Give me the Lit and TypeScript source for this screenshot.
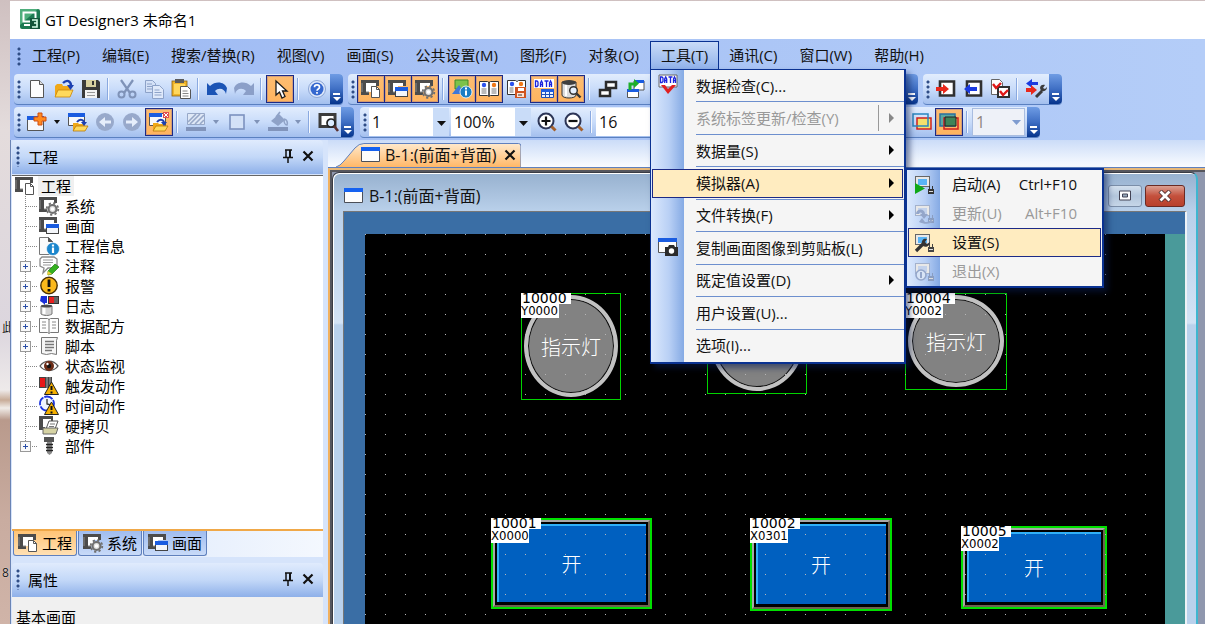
import { LitElement, html, svg, css, nothing } from "lit";
import { customElement } from "lit/decorators.js";
import { classMap } from "lit/directives/class-map.js";
import { styleMap } from "lit/directives/style-map.js";

const screen = svg`<path d="M0 1h18v6h-3V4H5v9h3v3H0z" fill="#4c4c4c"/><path d="M5 4h10v3h-5v6H5z" fill="#fff"/><path d="M1 4v9M5 13h3" stroke="#8a8a8a"/>`;
const miniWin = svg`<rect x="7.5" y="8.500" width="12" height="9" fill="#f4f6fa" stroke="#444"/><path d="M7 8h13v4H7z" fill="#1a5ce0"/>`;
const folder = svg`<path d="M1 7l2-2h5l1 2h7v11H1z" fill="#f0a818"/><path d="M4 11h15l-3 7H1z" fill="#ffd95c" stroke="#c98508" stroke-width=".8"/>`;
const warn = svg`<path d="M12.500 6L19.500 18.500H5.500z" fill="#f5b000" stroke="#222"/><path d="M12.500 10v4M12.500 15.500v2" stroke="#111" stroke-width="2"/>`;
const pc = (c: string, s: string) => svg`<rect x="1.500" y="2.500" width="14" height="10" fill="#e8e8e8" stroke="${s}"/><rect x="4" y="5" width="9" height="6" fill="${c}"/>`;
const plug = (c: string) => svg`<path d="M14 15h6v5h-6zM15 12h1v3h-1zM18 12h1v3h-1z" fill="${c}"/><path d="M15 17.500h4" stroke="#ddd"/>`;

const ICONS: Record<string, unknown> = {
  app: svg`<rect width="20" height="20" rx="2" fill="#1c7a52"/><path d="M0 0h18L0 16z" fill="#4fae7c"/><rect x="3.500" y="3.500" width="12" height="9" fill="none" stroke="#fff" stroke-width="2"/><path d="M4 16h6" stroke="#fff" stroke-width="2"/><rect x="10" y="9" width="10" height="11" fill="#14563a"/><path d="M12 11h5v3h-3 3v4h-5" fill="none" stroke="#d8ffe9" stroke-width="1.600"/>`,
  new: svg`<path d="M3.500 1.500h9l4 4v13h-13z" fill="#fdfdfd" stroke="#555"/><path d="M12.500 1.500v4h4" fill="#ddd" stroke="#555"/>`,
  open: svg`${folder}<path d="M9 4c4-4 8-2 8 3" fill="none" stroke="#1c3fb0" stroke-width="2.400"/><path d="M13 6h7l-3.500 5z" fill="#1c3fb0"/>`,
  save: svg`<path d="M1 1h16l2 2v16H1z" fill="#3a3a3a"/><path d="M5 1h10v7H5z" fill="#d8d0a0"/><path d="M11 2h2v4h-2z" fill="#333"/><path d="M4 11h12v8H4z" fill="#f4f4f4"/><path d="M6 13.500h8M6 16.500h8" stroke="#999"/>`,
  cut: svg`<path d="M4 1l9 13M16 1L7 14" stroke="#7f93b8" stroke-width="2.200"/><circle cx="4.500" cy="15.500" r="3" fill="none" stroke="#7f93b8" stroke-width="2"/><circle cx="15.500" cy="15.500" r="3" fill="none" stroke="#7f93b8" stroke-width="2"/>`,
  copy: svg`<path d="M1.500 1.500h7l3 3v9h-10z" fill="#d4e1f7" stroke="#8da2c8"/><path d="M3 5h5M3 7.500h5M3 10h5" stroke="#8da2c8"/><path d="M8.500 6.500h7l4 4v9h-11z" fill="#dfe9fa" stroke="#8da2c8"/><path d="M10.500 11h5M10.500 13.500h7M10.500 16h7" stroke="#8da2c8"/>`,
  paste: svg`<rect x="1" y="2" width="15" height="15" fill="#f0b429" stroke="#8a6210" stroke-width=".8"/><rect x="4" y="0" width="9" height="4" fill="#5b5b5b"/><rect x="3" y="5" width="11" height="10" fill="#ffd75c"/><path d="M9.500 7.500h7l3 3v9h-10z" fill="#fff" stroke="#555"/><path d="M11.500 12h5M11.500 14.500h6M11.500 17h6" stroke="#888"/>`,
  undo: svg`<path d="M0 4l3 3c6-6 15-4 17 2l-1 6c-1-5-7-7-11-3l3 4H0z" fill="#1b54b5"/>`,
  redo: svg`<path d="M20 4l-3 3C11 1 2 3 0 9l1 6c1-5 7-7 11-3l-3 4h11z" fill="#8b9fc8"/>`,
  pointer: svg`<path d="M6 2v14l3.500-3 2.500 6 3-1.500-2.500-5.500H17z" fill="#fff" stroke="#1a1a1a" stroke-width="1.300"/>`,
  help: svg`<circle cx="10" cy="10" r="8.500" fill="#dfe9fb" stroke="#8aa4d4"/><circle cx="10" cy="10" r="6.500" fill="#3568cf"/><path d="M7.500 8.200c0-3 5-3 5 0 0 1.800-2.500 1.800-2.500 3.600M10 13v1.800" fill="none" stroke="#fff" stroke-width="1.700"/>`,
  project: svg`${screen}<path d="M10.500 7.500h5l3 3v8h-8z" fill="#fff" stroke="#555"/><path d="M15.500 7.500v3h3" fill="none" stroke="#555"/>`,
  screens: svg`${screen}${miniWin}`,
  system: svg`${screen}<circle cx="13.500" cy="13" r="4" fill="#ddd" stroke="#707070" stroke-width="2.200"/><circle cx="13.500" cy="13" r="5.800" fill="none" stroke="#707070" stroke-width="1.800" stroke-dasharray="2.200 2.350"/><circle cx="13.500" cy="13" r="1.800" fill="#fff"/>`,
  shapes: svg`<path d="M3 1h13v9H3z" fill="#7cc24a" stroke="#3c8a28"/><path d="M0 15L7 6l6 9z" fill="#3f78d8"/><circle cx="14" cy="13" r="6" fill="#1b7ec4" stroke="#fff" stroke-width=".8"/><path d="M14 8.500v2M14 11.500v5" stroke="#fff" stroke-width="2"/>`,
  book: svg`<path d="M.5 2.500h8l1.500 1 1.500-1h8v14h-8l-1.500 1-1.500-1h-8z" fill="#fff" stroke="#333"/><path d="M10 3v14" stroke="#333" stroke-width="1.600"/><circle cx="5" cy="6" r="2.200" fill="#2d52ee"/><circle cx="15" cy="6" r="2.200" fill="#f07818"/><path d="M2.500 10h5M2.500 12h5M2.500 14h5M12.500 10h5M12.500 12h5M12.500 14h5" stroke="#777"/>`,
  bookSave: svg`<path d="M.5 1.500h8l1.500 1 1.500-1h7v14H.5z" fill="#fff" stroke="#333"/><circle cx="5" cy="5" r="2.200" fill="#2d52ee"/><circle cx="14" cy="5" r="2.200" fill="#f07818"/><path d="M2.500 9h4M2.500 11h4M2.500 13h4" stroke="#777"/><path d="M8 8h11v11H8z" fill="#cf5420"/><path d="M11 9h6v3h-6z" fill="#fff"/><path d="M10 14h7v4h-7z" fill="#ffe3d2"/><path d="M11 16h4" stroke="#333"/>`,
  data: svg`<path d="M0 0h20v9H0z" fill="#fff"/><path d="M1.500 2v5.500h1.500l1-1V3L3 2zM6.500 8V4l1-2 1 2v4M6.500 5.500h2M10.500 2h4M12.500 2v6M15.500 8V4l1-2 1 2v4M15.500 5.500h2" fill="none" stroke="#1b23dd" stroke-width="1.300"/><path d="M7.500 10.500h12v8h-12z" fill="#eaf2ff" stroke="#1e4fb8"/><path d="M7 10h13v3H7z" fill="#1d5cdf"/><path d="M11.500 13v6M15.500 13v6M7 15.500h12" stroke="#1e4fb8"/>`,
  dataCheck: svg`<path d="M1 0h18v12H1z" fill="#fff" stroke="#666"/><path d="M2.500 2v5.500h1.500l1-1V3L4 2zM6.700 8V4l1-2 1 2v4M6.700 5.500h2M10.500 2h4M12.500 2v6M15.500 8V4l1-2 1 2v4M15.500 5.500h2" fill="none" stroke="#1b23dd" stroke-width="1.300"/><path d="M3 10h4l3 4 4-4h4l-8 9z" fill="#e02020"/>`,
  db: svg`<path d="M1 3v13c0 4 14 4 14 0V3z" fill="#dcdcdc" stroke="#333"/><path d="M5 5v12" stroke="#fff" stroke-width="2"/><ellipse cx="8" cy="3.500" rx="7" ry="2.500" fill="#3e3e3e"/><circle cx="12.500" cy="11.500" r="3.800" fill="#e6f1ff" stroke="#333" stroke-width="1.500"/><path d="M15.500 14.500l4 4" stroke="#333" stroke-width="2.400"/>`,
  windows: svg`<path d="M8 3h10v6H8z" fill="#fff" stroke="#2c2c2c" stroke-width="2.500"/><path d="M2 11h10v6H2z" fill="#fff" stroke="#2c2c2c" stroke-width="2.500"/>`,
  winSwap: svg`<path d="M9 2h10v9H9z" fill="#fff" stroke="#555"/><path d="M9 1h10v3H9z" fill="#1a5ce0"/><path d="M2.500 10.500h11v8h-11z" fill="#fff" stroke="#555"/><path d="M2 10h12v3H2z" fill="#1a5ce0"/><path d="M5 11V5h4" fill="none" stroke="#1dae2b" stroke-width="3"/><path d="M9 0v9l5-4.500z" fill="#1dae2b"/>`,
  importD: svg`<path d="M4 2.500h14v14H4z" fill="#fff" stroke="#303030" stroke-width="2.600"/><path d="M0 8h7V5l6 5-6 5v-3H0z" fill="#e8281c"/>`,
  exportD: svg`<path d="M4 2.500h14v14H4z" fill="#fff" stroke="#303030" stroke-width="2.600"/><path d="M14 8H7V5l-6 5 6 5v-3h7z" fill="#1c3be0"/>`,
  verify: svg`<path d="M1.500.5h8l3 3v12h-11z" fill="#fff" stroke="#666"/><path d="M8 8h11v10H8z" fill="#fff" stroke="#303030" stroke-width="2"/><path d="M3 5l3 4 5-5M10 12l3 4 5-5" fill="none" stroke="#e01818" stroke-width="2.400"/>`,
  comm: svg`<path d="M12 3H6V0L0 4.500 6 9V6h6z" fill="#1c3be0"/><path d="M0 9h5V6l6 5-6 5v-3H0z" fill="#e8281c"/><path d="M10 18l6-6" stroke="#3c3c3c" stroke-width="3"/><path d="M14 9c0-3 3-4 5-3l-2 3 2 1 2-2c0 4-4 5-6 4z" fill="#3c3c3c"/>`,
  screenNew: svg`<path d="M.5 4.500h16v14H.5z" fill="#f6f8fb" stroke="#555"/><path d="M0 4h17v4H0z" fill="#1a5ce0"/><path d="M11 1h4v4h4v4h-4v4h-4V9H7V5h4z" fill="#ff8b20" stroke="#d04c10"/>`,
  screenOpen: svg`<path d="M.5 1.500h16v12H.5z" fill="#f6f8fb" stroke="#555"/><path d="M0 1h17v4H0z" fill="#1a5ce0"/><path d="M5 11h5l1 1h6v7H5z" fill="#f0a818"/><path d="M8 14h12l-3 5H5z" fill="#ffd95c" stroke="#b87a08" stroke-width=".8"/><path d="M9 10c3-4 7-2 7 1" fill="none" stroke="#1c3fb0" stroke-width="2"/><path d="M13 10h6l-3 4z" fill="#1c3fb0"/>`,
  screenClose: svg`<path d="M.5 1.500h16v12H.5z" fill="#f6f8fb" stroke="#555"/><path d="M0 1h13v4H0z" fill="#1a5ce0"/><path d="M14 0h6v6h-6z" fill="#e05050"/><path d="M15 1l4 4M19 1l-4 4" stroke="#fff"/><path d="M4 11h5l1 1h6v7H4z" fill="#f0a818"/><path d="M7 14h12l-3 5H4z" fill="#ffd95c" stroke="#b87a08" stroke-width=".8"/><path d="M8 10c3-4 7-2 7 1" fill="none" stroke="#1c3fb0" stroke-width="2"/><path d="M12 10h6l-3 4z" fill="#1c3fb0"/>`,
  back: svg`<circle cx="10" cy="10" r="9" fill="#98a9cb"/><path d="M16 8.500h-6V5l-6 5 6 5v-3.500h6z" fill="#e6eefb"/>`,
  forward: svg`<circle cx="10" cy="10" r="9" fill="#98a9cb"/><path d="M4 8.500h6V5l6 5-6 5v-3.500H4z" fill="#e6eefb"/>`,
  hatch: svg`<path d="M1.500 1.500h17v11h-17z" fill="#dfe8f6" stroke="#97a8c8"/><path d="M2 10l8-8M4 12L14 2M9 12l9-9M14 12l4-4" stroke="#97a8c8" stroke-width="1.600"/><path d="M0 15h20v4H0z" fill="#8194bb"/>`,
  rect: svg`<rect x="3" y="3" width="14" height="14" fill="#d3e1f7" stroke="#7c92bf" stroke-width="1.600"/>`,
  bucket: svg`<path d="M3 9l8-7 6 6-7 6z" fill="#8fa2c7"/><path d="M8 5l4-5M16 7c3 0 4 4 3 6-2 0-3-3-3-5" stroke="#8fa2c7" stroke-width="1.600" fill="none"/><path d="M0 15h20v4H0z" fill="#8194bb"/>`,
  find: svg`<path d="M2 2.500h15v12H2z" fill="#fff" stroke="#3c3c3c" stroke-width="3"/><circle cx="13" cy="11" r="4" fill="#dcebff" stroke="#222" stroke-width="1.700"/><path d="M16 14l4 5" stroke="#5a3030" stroke-width="2.600"/>`,
  zoomIn: svg`<circle cx="9" cy="9" r="7.500" fill="#fff" stroke="#2c3556" stroke-width="2"/><path d="M4.500 9h9M9 4.500v9" stroke="#111" stroke-width="2.200"/><path d="M14.500 14.500l4 4" stroke="#a4602c" stroke-width="3"/>`,
  zoomOut: svg`<circle cx="9" cy="9" r="7.500" fill="#fff" stroke="#2c3556" stroke-width="2"/><path d="M4.500 9h9" stroke="#111" stroke-width="2.200"/><path d="M14.500 14.500l4 4" stroke="#a4602c" stroke-width="3"/>`,
  layFront: svg`<path d="M5 6h14v11H5z" fill="#f5e06c" stroke="#d02020" stroke-width="1.500"/><path d="M1 2h15v12H1z" fill="none" stroke="#2a86c0" stroke-width="1.500"/>`,
  layBoth: svg`<path d="M1 2h15v12H1z" fill="#5aa8a0" stroke="#2a70a0" stroke-width="1.500"/><path d="M5 6h14v11H5z" fill="none" stroke="#d02020" stroke-width="1.500"/><path d="M6 5h11v9H6z" fill="#3f8458" stroke="#222"/>`,
  info: svg`<path d="M.5 1.500h9l4 4v13H.5z" fill="#fafafa" stroke="#777"/><path d="M9.500 1.500v4h4" fill="#555" stroke="#555"/><circle cx="14" cy="13" r="6.500" fill="#1b86cc" stroke="#fff" stroke-width=".6"/><path d="M14 8.500v2M14 11.500v5.500" stroke="#fff" stroke-width="2.200"/>`,
  note: svg`<path d="M3 1h12l3 2v7l-3 2H9l-5 5 1-5-4-2V3z" fill="#fff" stroke="#8a8a8a" stroke-width="1.300"/><path d="M4 4h10M4 6.500h10M4 9h8" stroke="#999"/><path d="M9 15l7-7 4 3-7 7-4 1z" fill="#35b020" stroke="#1c7a10" stroke-width=".7"/><path d="M9 15l4 3-5 1z" fill="#f0d040"/>`,
  alarm: svg`<circle cx="10" cy="9.500" r="8.200" fill="#fbb91c" stroke="#4a3000" stroke-width="1.400"/><path d="M10 3.500v7.500M10 13v2.600" stroke="#111" stroke-width="2.800"/>`,
  log: svg`<path d="M2 0h6v7H6v2L4 7 1 5z" fill="#1a2fd8"/><path d="M9 0h11v8H9z" fill="#333"/><path d="M10 1h5v6h-5z" fill="#e82020"/><path d="M16 1v6M18 1v6" stroke="#999"/><path d="M2 10h11v8c-3 2-8 2-11 0z" fill="#d4d4d4" stroke="#777"/><path d="M5 11v7" stroke="#fff" stroke-width="3"/><ellipse cx="7.500" cy="10" rx="5.500" ry="1.500" fill="#4a4a4a"/>`,
  recipe: svg`<path d="M.5 2.500h8l1.500 1 1.500-1h8v14h-8l-1.500 1-1.500-1h-8z" fill="#fdfdfd" stroke="#777"/><path d="M10 3v14" stroke="#777"/><path d="M3 6h4M3 9h4M3 12h4M13 6h4M13 9h4M13 12h4" stroke="#888"/>`,
  script: svg`<path d="M2.500 1.500h16l-1 3v14l-5-1-5 1-5-1z" fill="#f6f6f6" stroke="#777"/><path d="M6 5.500h9M6 8.500h9M6 11.500h9M6 14.500h7" stroke="#777" stroke-width="1.300"/>`,
  eye: svg`<path d="M1 10C5 4 14 3 19 10 15 16 5 16 1 10z" fill="#fff" stroke="#555" stroke-width="1.300"/><circle cx="10" cy="10" r="5" fill="#6b2c16"/><circle cx="10" cy="10" r="2.200" fill="#111"/><circle cx="8.500" cy="8" r="1.200" fill="#fff"/>`,
  trigger: svg`<path d="M0 1h13v11H0z" fill="#444"/><path d="M1 2h5v9H1z" fill="#e81818"/><path d="M8 1v11M11 1v11" stroke="#aaa"/>${warn}`,
  timer: svg`<circle cx="8" cy="7.500" r="7" fill="#eef3ff" stroke="#1c35e0" stroke-width="1.800" stroke-dasharray="9 1"/><path d="M8 3v5l4 1" fill="none" stroke="#333" stroke-width="1.300"/>${warn}`,
  print: svg`<path d="M0 0h14v5h-2V3H4v8h2v3H0z" fill="#4c4c4c"/><path d="M10 5h9l-3 8H7z" fill="#fff" stroke="#555"/><path d="M11 8h5M10 10.500h5" stroke="#777"/><path d="M4 12h15l-2 6H4z" fill="#d6d3a4" stroke="#666"/>`,
  screw: svg`<path d="M5 1h10v5H5z" fill="#555"/><path d="M8 6h5v11l-2.500 2L8 17z" fill="#8a8a8a"/><path d="M7 8.500h7M7 11.500h7M7 14.500h7" stroke="#222" stroke-width="1.500"/>`,
  camera: svg`<path d="M.5 1.500h18v14H.5z" fill="#fdfdfd" stroke="#555"/><path d="M0 1h19v4H0z" fill="#1a5ce0"/><path d="M7 10h3l1-2h5l1 2h3v9H7z" fill="#2b2b2b"/><circle cx="13.500" cy="14" r="2.700" fill="#fff"/>`,
  simStart: svg`${pc("#59b4f5", "#666")}${plug("#333")}<path d="M1 9l10 5.500L1 20z" fill="#0fa818"/>`,
  simUpdate: svg`${pc("#c3d2ec", "#a3b1cc")}${plug("#8a9dc0")}<path d="M2 11c0-6 9-6 9 0h3l-4 5-4-5h2c0-2-3-2-3 0zM5 19l3-4 3 4c3 0 5 0 5-3l3 2c-2 3-8 4-14 1z" fill="#94a6ca"/>`,
  simSet: svg`${pc("#59b4f5", "#666")}${plug("#444")}<path d="M2 19l7-7" stroke="#333" stroke-width="3.200"/><path d="M8 12c-1-4 2-6 5-5l-2 3 2 2 3-2c0 4-4 6-7 4z" fill="#333"/>`,
  simExit: svg`${pc("#c3d2ec", "#a3b1cc")}${plug("#8a9dc0")}<circle cx="7" cy="14" r="5" fill="#d8e4f6" stroke="#94a6ca" stroke-width="1.600"/><path d="M7 11v6" stroke="#94a6ca" stroke-width="2"/>`,
  win: svg`<path d="M.5 2.500h18v14H.5z" fill="#fdfdfd" stroke="#4b4f58"/><path d="M0 2h19v4H0z" fill="#1561f0"/>`,
  pin: svg`<path d="M7 4h7M8 4v7M5 11.500h10M10 12v5" fill="none" stroke="#111" stroke-width="1.500"/><path d="M12 4v7" stroke="#111" stroke-width="2"/>`,
  close: svg`<path d="M5.500 5.500l9 9M14.500 5.500l-9 9" stroke="#111" stroke-width="2.200"/>`,
};

const icon = (name: string) =>
  html`<svg class="ico" viewBox="0 0 20 20" aria-hidden="true">${ICONS[name]}</svg>`;

const MENUS = ["工程(P)", "编辑(E)", "搜索/替换(R)", "视图(V)", "画面(S)", "公共设置(M)", "图形(F)", "对象(O)", "工具(T)", "通讯(C)", "窗口(W)", "帮助(H)"];

interface Entry { label: string; icon?: string; sub?: boolean; off?: boolean; hot?: boolean; key?: string; split?: boolean }

const TOOLS: Entry[] = [
  { label: "数据检查(C)...", icon: "dataCheck" },
  { label: "系统标签更新/检查(Y)", sub: true, off: true, split: true },
  { label: "数据量(S)", sub: true },
  { label: "模拟器(A)", sub: true, hot: true },
  { label: "文件转换(F)", sub: true },
  { label: "复制画面图像到剪贴板(L)", icon: "camera" },
  { label: "既定值设置(D)", sub: true },
  { label: "用户设置(U)..." },
  { label: "选项(I)..." },
];

const SIMULATOR: Entry[] = [
  { label: "启动(A)", icon: "simStart", key: "Ctrl+F10" },
  { label: "更新(U)", icon: "simUpdate", key: "Alt+F10", off: true },
  { label: "设置(S)", icon: "simSet", hot: true },
  { label: "退出(X)", icon: "simExit", off: true },
];

const TREE: [string, string, boolean][] = [
  ["system", "系统", false],
  ["screens", "画面", false],
  ["info", "工程信息", false],
  ["note", "注释", true],
  ["alarm", "报警", true],
  ["log", "日志", true],
  ["recipe", "数据配方", true],
  ["script", "脚本", true],
  ["eye", "状态监视", false],
  ["trigger", "触发动作", false],
  ["timer", "时间动作", false],
  ["print", "硬拷贝", false],
  ["screw", "部件", true],
];

interface Part { kind: "lamp" | "switch"; x: number; y: number; w: number; h: number; id?: string; dev?: string; text?: string }

const PARTS: Part[] = [
  { kind: "lamp", x: 156, y: 59, w: 100, h: 107, id: "10000", dev: "Y0000", text: "指示灯" },
  { kind: "lamp", x: 342, y: 53, w: 100, h: 107 },
  { kind: "lamp", x: 540, y: 59, w: 102, h: 97, id: "10004", dev: "Y0002", text: "指示灯" },
  { kind: "switch", x: 126, y: 284, w: 161, h: 91, id: "10001", dev: "X0000", text: "开" },
  { kind: "switch", x: 385, y: 284, w: 142, h: 93, id: "10002", dev: "X0301", text: "开" },
  { kind: "switch", x: 596, y: 292, w: 146, h: 83, id: "10005", dev: "X0002", text: "开" },
];

const shared = css`
  * { box-sizing: border-box; }
  button, select { font: inherit; color: inherit; margin: 0; }
  button { border: 0; background: none; padding: 0; }
  .ico { width: 20px; height: 20px; display: block; flex: none; overflow: visible; }
`;

@customElement("tool-strips")
class ToolStrips extends LitElement {
  static styles = [shared, css`
    :host { display: flex; flex-direction: column; gap: 2px; padding: 1px 0 0 4px; font-size: 16px; }
    .row { display: flex; gap: 5px; height: 31px; }
    .bar { display: flex; align-items: center; border-radius: 4px; background: linear-gradient(#e2edfd, #c9dcfa 50%, #a3bfee); border-bottom: 1px solid #5a80c0; flex: none; }
    .wide { width: 570px; }
    .wider { width: 680px; margin-left: 1px; }
    .grip { width: 9px; height: 20px; flex: none; background: radial-gradient(circle at 5px 3px, #2f4d86 1px, transparent 2px) 0 0 / 9px 5px; }
    .btn { width: 27px; height: 28px; display: flex; align-items: center; justify-content: center; flex: none; }
    .on { border: 1px solid #1c2a86; background: linear-gradient(#fdbd72, #ffb45f); box-shadow: inset 0 0 0 1px #7a6a9a55; width: 28px; }
    .on + .on { margin-left: -1px; }
    .tick { width: 14px; height: 28px; display: flex; align-items: center; justify-content: center; flex: none; }
    .tick::before { content: ""; border: 3px solid transparent; border-top: 4px solid #111; border-bottom: 0; }
    .dim::before { border-top-color: #8093b8; }
    .sep { width: 9px; height: 22px; flex: none; background: linear-gradient(90deg, transparent 3px, #8aa9e0 3px, #8aa9e0 4px, #f4f8ff 4px, #f4f8ff 5px, transparent 5px); }
    .end { width: 13px; margin-left: auto; align-self: stretch; flex: none; border-radius: 0 4px 4px 0; background: linear-gradient(#6f9ce4, #3f6fc4 50%, #06348c); display: flex; flex-direction: column; justify-content: flex-end; align-items: center; gap: 2px; padding-bottom: 3px; }
    .end::before { content: ""; width: 7px; height: 2px; background: #fff; }
    .end::after { content: ""; border: 4px solid transparent; border-top-color: #fff; border-bottom: 0; }
    select { appearance: none; height: 28px; width: 80px; border: 0; border-radius: 0; padding: 0 18px 0 3px; margin-right: 2px; color: #111; flex: none;
      background: url("data:image/svg+xml,%3Csvg xmlns='http://www.w3.org/2000/svg' width='16' height='28'%3E%3Cpath d='M0 0h16v28H0z' fill='%23c9dcf8'/%3E%3Cpath d='M4 13h9l-4.500 5z' fill='%23111'/%3E%3C/svg%3E") right / 16px 28px no-repeat #fff; }
    select:disabled { width: 53px; border: 1px solid #a9bde0; color: #8f8580; opacity: 1;
      background: url("data:image/svg+xml,%3Csvg xmlns='http://www.w3.org/2000/svg' width='16' height='28'%3E%3Cpath d='M4 12h9l-4.500 5z' fill='%237f9cd0'/%3E%3C/svg%3E") right / 16px 28px no-repeat #eef1f8; }
    .gap { flex: 1; }
  `];

  private btn(name: string, label: string, on = false) {
    return html`<button class=${classMap({ btn: true, on })} aria-label=${label} aria-pressed=${on ? "true" : nothing}>${icon(name)}</button>`;
  }

  render() {
    const grip = html`<span class="grip"></span>`;
    const sep = html`<span class="sep"></span>`;
    const end = html`<button class="end" aria-label="工具栏选项"></button>`;
    const b = this.btn.bind(this);
    return html`
      <div class="row">
        <div class="bar">${grip}${b("new", "新建")}${b("open", "打开")}${b("save", "保存")}${sep}${b("cut", "剪切")}${b("copy", "复制")}${b("paste", "粘贴")}${sep}${b("undo", "撤销")}${b("redo", "恢复")}${sep}${b("pointer", "选择", true)}${sep}${b("help", "帮助")}${end}</div>
        <div class="bar wide">${grip}${b("project", "工程", true)}${b("screens", "画面", true)}${b("system", "系统", true)}${sep}${b("shapes", "属性", true)}${b("book", "库", true)}${b("bookSave", "库编辑")}${b("data", "数据浏览", true)}${b("db", "数据查找", true)}${sep}${b("windows", "窗口")}${b("winSwap", "切换")}${end}</div>
        <div class="bar">${grip}${b("importD", "写入")}${b("exportD", "读取")}${b("verify", "校验")}${sep}${b("comm", "通讯设置")}${end}</div>
      </div>
      <div class="row">
        <div class="bar">${grip}${b("screenNew", "新建画面")}<button class="tick" aria-label="新建画面选项"></button>${b("screenOpen", "打开画面")}${b("back", "后退")}${b("forward", "前进")}${b("screenClose", "关闭画面", true)}${sep}${b("hatch", "图样")}<button class="tick dim" aria-label="图样选项"></button>${b("rect", "线色")}<button class="tick dim" aria-label="线色选项"></button>${b("bucket", "填充")}<button class="tick dim" aria-label="填充选项"></button>${sep}${b("find", "预览")}${end}</div>
        <div class="bar wider">${grip}<select aria-label="画面编号"><option>1</option></select><select aria-label="缩放"><option>100%</option></select>${b("zoomIn", "放大")}${b("zoomOut", "缩小")}${sep}<select aria-label="网格"><option>16</option></select><span class="gap"></span>${b("layFront", "前面层")}${b("layBoth", "前面+背面", true)}${sep}<select aria-label="层" disabled><option>1</option></select>${end}</div>
      </div>`;
  }
}

@customElement("menu-bar")
class MenuBar extends LitElement {
  static styles = [shared, css`
    :host { display: flex; height: 34px; align-items: center; padding: 0 0 0 4px; font-size: 15px; color: #111; white-space: nowrap; }
    .grip { width: 7px; height: 20px; flex: none; background: radial-gradient(circle at 5px 3px, #2f4d86 1px, transparent 2px) 0 0 / 9px 5px; }
    .top { position: relative; }
    .head { height: 30px; padding: 0 10px; line-height: 26px; border: 1px solid transparent; border-bottom: 0; display: flex; }
    .open .head { border-color: #0a3292; background: linear-gradient(#c9dbf8, #8db0ea); margin: 0 -1px 0 0; }
    .pop { position: absolute; z-index: 5; margin: 0; padding: 0 1px; border: 2px solid #0a3292; list-style: none; display: grid; grid-auto-rows: 1fr; box-shadow: 4px 4px 6px #0a1c5088;
      background: linear-gradient(90deg, #dce9fd, #b9d0f5 18px, #85aae4 33px, #f5f5f5 33px); }
    .tools { left: 0; top: 28px; width: 256px; height: 295px; border-width: 1px 2px 2px 1px; }
    .sim { left: 253px; top: 1px; width: 199px; height: 120px; }
    .item { position: relative; display: flex; min-height: 0; }
    .tools > .item:not(:last-child)::after { content: ""; position: absolute; left: 44px; right: -1px; bottom: 0; border-top: 1px solid #6d8fce; }
    .cmd { flex: 1; display: flex; align-items: center; text-align: left; padding: 0 8px 2px 5px; border: 1px solid transparent; min-width: 0; }
    .tools > .item > .cmd { margin: 2px 0; }
    .hot > .cmd { background: #ffecc0; border-color: #1c2a86; }
    .slot { width: 38px; flex: none; }
    .off > .cmd { color: #999; }
    .key { margin-left: auto; padding-right: 15px; }
    .arrow { margin-left: auto; border: 5px solid transparent; border-left: 5px solid #000; border-right: 0; }
    .off .arrow { border-left-color: #888; }
    .split { margin-left: auto; height: 26px; border-left: 1px solid #999; margin-right: 10px; }
    .split + .arrow { margin-left: 0; }
  `];

  private entry(e: Entry): unknown {
    return html`<li class=${classMap({ item: true, hot: !!e.hot, off: !!e.off })}>
      <button class="cmd" role="menuitem" ?disabled=${e.off}>
        <span class="slot">${e.icon ? icon(e.icon) : nothing}</span><span>${e.label}</span>
        ${e.key ? html`<span class="key">${e.key}</span>` : nothing}
        ${e.split ? html`<span class="split"></span>` : nothing}
        ${e.sub ? html`<span class="arrow"></span>` : nothing}
      </button>
      ${e.sub && e.hot ? html`<ul class="pop sim" role="menu">${SIMULATOR.map((s) => this.entry(s))}</ul>` : nothing}
    </li>`;
  }

  render() {
    return html`<span class="grip"></span>${MENUS.map((m) => {
      const open = m.startsWith("工具");
      return html`<div class=${classMap({ top: true, open })}>
        <button class="head">${m}</button>
        ${open ? html`<ul class="pop tools" role="menu">${TOOLS.map((t) => this.entry(t))}</ul>` : nothing}
      </div>`;
    })}`;
  }
}

@customElement("side-dock")
class SideDock extends LitElement {
  static styles = [shared, css`
    :host { display: flex; flex-direction: column; width: 313px; flex: none; padding-left: 1px; color: #000; font-size: 15px; border-left: 1px solid #6b84b4; min-height: 0; }
    .cap { display: flex; align-items: center; height: 34px; flex: none; padding: 0 5px 2px 1px; border-radius: 4px 4px 0 0; background: linear-gradient(#e0ebfd, #c3d8f8 50%, #8eb0e9); }
    .title { font: inherit; margin: 0 auto 0 6px; }
    .grip { width: 9px; height: 22px; flex: none; background: radial-gradient(circle at 5px 3px, #2f4d86 1px, transparent 2px) 0 0 / 9px 5px; }
    .tree { margin: 1px 0 0; padding: 0; list-style: none; height: 354px; flex: none; background: #fff; border-top: 1px solid #666; line-height: 20px; white-space: nowrap; }
    .node { display: flex; height: 20px; align-items: center; }
    .root { padding-left: 3px; }
    .name { padding-left: 6px; }
    .root .name { background: #f0f0f0; margin-left: 3px; padding: 0 3px; }
    .stem { width: 27px; height: 20px; flex: none; display: flex; align-items: center; padding-left: 8px;
      background: repeating-linear-gradient(#888 0 1px, transparent 1px 2px) 13px 0 / 1px 100% no-repeat, repeating-linear-gradient(90deg, #888 0 1px, transparent 1px 2px) 14px 10px / 12px 1px no-repeat; }
    .last .stem { background-size: 1px 10px, 12px 1px; }
    .plus { width: 11px; height: 11px; border: 1px solid #999; background: linear-gradient(#2b4fa8, #2b4fa8) center / 5px 1px no-repeat, linear-gradient(#2b4fa8, #2b4fa8) center / 1px 5px no-repeat, #fafafa; }
    .tabs { display: flex; height: 28px; flex: none; border-top: 2px solid #f0a848; padding-left: 1px; gap: 1px; background: linear-gradient(90deg, #d5e3fb, #f4f8fe); align-items: flex-start; }
    .tab { display: flex; align-items: center; height: 25px; padding: 0 4px 1px; gap: 4px; border: 1px solid #5f80bd; border-top: 0; border-radius: 0 0 3px 3px; background: linear-gradient(#a0bdf0, #c8daf8); }
    .sel { background: linear-gradient(#ffc476, #ffe0b4); }
    .space { height: 6px; flex: none; }
    .props { flex: 1; background: #f0f0f0; padding: 9px 4px 0; line-height: 22px; overflow: hidden; }
  `];

  private cap(t: string) {
    return html`<header class="cap"><span class="grip"></span><h2 class="title">${t}</h2><button aria-label="自动隐藏">${icon("pin")}</button><button aria-label="关闭">${icon("close")}</button></header>`;
  }

  render() {
    return html`
      ${this.cap("工程")}
      <ul class="tree">
        <li class="node root">${icon("project")}<span class="name">工程</span></li>
        ${TREE.map(([ic, name, more], i) => html`<li class=${classMap({ node: true, last: i === TREE.length - 1 })}>
          <span class="stem">${more ? html`<button class="plus" aria-label="展开${name}"></button>` : nothing}</span>${icon(ic)}<span class="name">${name}</span></li>`)}
      </ul>
      <nav class="tabs">
        <button class="tab sel">${icon("project")}工程</button>
        <button class="tab">${icon("system")}系统</button>
        <button class="tab">${icon("screens")}画面</button>
      </nav>
      <div class="space"></div>
      ${this.cap("属性")}
      <div class="props">基本画面</div>`;
  }
}

@customElement("screen-editor")
class ScreenEditor extends LitElement {
  static styles = [shared, css`
    :host { display: flex; flex-direction: column; flex: 1; min-width: 0; min-height: 0; margin-left: 5px; font-size: 16px; color: #111; }
    .strip { display: flex; height: 28px; flex: none; background: linear-gradient(#cbdcf8, #fafcff); align-items: flex-end; padding-left: 8px; border-bottom: 1px solid #5f80bd; }
    .doc { position: relative; display: flex; align-items: center; height: 24px; line-height: 20px; padding: 0 1px 0 25px; gap: 4px; white-space: nowrap; }
    .shape { position: absolute; inset: 0; width: 100%; height: 100%; }
    .doc > :not(.shape) { position: relative; }
    .area { flex: 1; min-height: 0; display: flex; background: #8f97ae; border-left: 2px solid #f0b060; border-top: 2px solid #e8b878; padding: 2px 7px 0 2px; box-shadow: inset 2px 2px 0 #55565e; }
    .win { flex: 1; min-width: 0; display: flex; flex-direction: column; border: 1px solid #3a3c44; border-bottom: 0; border-right: 2px solid #3fb6d0; border-radius: 7px 7px 0 0; box-shadow: inset 1px 1px 0 #fff;
      background: linear-gradient(#97b1cf, #b9d0ea 38px, #d3e3f5 150px, #b9d1ec 152px); padding: 0 9px 0 10px; }
    .cap { height: 38px; flex: none; display: flex; align-items: center; gap: 5px; padding: 8px 2px 0 1px; }
    .name { font: inherit; line-height: 20px; margin: 0 auto 0 0; }
    .ctl { height: 22px; width: 34px; border: 1px solid #7b8ea8; border-radius: 3px; background: linear-gradient(#d3e0ee, #b3c6dc 50%, #c6d6e8); display: grid; place-items: center; }
    .ctl + .ctl { margin-left: -2px; }
    .bad { width: 40px; background: linear-gradient(#dba093, #c4503c 50%, #b8402c); border-color: #6a2a24; }
    .ctl svg { width: 14px; height: 12px; }
    .view { flex: 1; min-height: 0; border: solid #777; border-width: 1px 2px 0 1px; border-right-color: #eef2f6; background: #3a6ea5; padding: 22px 0 0 21px; display: flex; overflow: hidden; }
    .base { flex: 1; background: #000; position: relative; margin: 0; overflow: hidden; }
    .teal { width: 20px; background: #4a9a9a; flex: none; }
    .dots { position: absolute; inset: 0; background: conic-gradient(from 270deg at 1px 1px, #b8b8b8 90deg, transparent 0) 0 0 / 20px 20px; }
    .part { position: absolute; border: 1px solid #00d400; color: #fff; display: grid; place-items: center; font-size: 20px; }
    .lamp .face { position: absolute; inset: 1px 2px 2px; border-radius: 50%; background: #828282; border: 4px solid #c2c2c2; box-shadow: inset 0 0 0 1px #111; }
    .switch { border-width: 2px; border-color: #00e000; }
    .switch .face { position: absolute; inset: 0; border: 2px solid; border-color: #a8a8a8 #6c6450 #6c6450 #a8a8a8; background: #000; padding: 2px 2px 3px 2px; display: grid; }
    .switch .face::before { content: ""; background: #0060c0; border-top: 2px solid #30b0f8; border-left: 2px solid #30b0f8; }
    .txt { position: absolute; inset: 0; display: grid; place-items: center; font-weight: 300; }
    .tag { position: absolute; display: flex; flex-direction: column; align-items: flex-start; color: #000; }
    .id, .dev { background: #fff; }
    .id { width: 50px; height: 11px; font: 14px/11px "DejaVu Sans", sans-serif; padding-left: 1px; }
    .dev { width: 38px; height: 14px; font: 13px/14px "DejaVu Sans Condensed", "DejaVu Sans", sans-serif; }
  `];

  render() {
    return html`
      <div class="strip"><div class="doc">
        <svg class="shape" viewBox="0 0 186 24" preserveAspectRatio="none" aria-hidden="true"><defs><linearGradient id="g" x2="0" y2="1"><stop stop-color="#ffe9cc"/><stop offset="1" stop-color="#ffb868"/></linearGradient></defs><path d="M0 24Q4 23 8 18L19 5Q23 .5 28 .5H183q2.500 0 2.500 2.500V24" fill="url(#g)" stroke="#5f80bd"/></svg>
        ${icon("win")}<span>B-1:(前面+背面)</span><button aria-label="关闭标签">${icon("close")}</button>
      </div></div>
      <div class="area"><section class="win">
        <header class="cap">${icon("win")}<h2 class="name">B-1:(前面+背面)</h2>
          <button class="ctl" aria-label="还原"><svg viewBox="0 0 14 12"><path d="M1.500 1h11v9h-11z" fill="#fff" stroke="#445"/><path d="M4.500 4h5v3h-5z" fill="#9ab" stroke="#445"/></svg></button>
          <button class="ctl bad" aria-label="关闭"><svg viewBox="0 0 14 12"><path d="M2 1l10 10M12 1L2 11" stroke="#533" stroke-width="4.500"/><path d="M2.500 1.500l9 9M11.500 1.500l-9 9" stroke="#fff" stroke-width="2.800"/></svg></button>
        </header>
        <div class="view">
          <div class="base">
            ${PARTS.map((p) => html`<div class="part ${p.kind}" style=${styleMap({ left: p.x + "px", top: p.y + "px", width: p.w + "px", height: p.h + "px" })}><span class="face"></span>${p.text ? html`<span class="txt">${p.text}</span>` : nothing}</div>`)}
            <div class="dots"></div>
            ${PARTS.filter((p) => p.id).map((p) => html`<div class="tag" style=${styleMap({ left: p.x + "px", top: p.y + "px" })}><span class="id">${p.id}</span><span class="dev">${p.dev}</span></div>`)}
          </div>
          <div class="teal"></div>
        </div>
      </section></div>`;
  }
}

@customElement("app-root")
class AppRoot extends LitElement {
  static styles = [shared, css`
    :host { display: flex; height: 100vh; overflow: hidden; font-family: "Open Sans", "Noto Sans CJK SC", sans-serif; font-size: 15px; background: linear-gradient(#cfc0c0, #e4dcdc 130px, #dcd6de 330px, #eeeaea 390px, #c8ac98 400px, #f0ece8 408px, #b99a8c 420px, #c9aca0 520px, #d0b4a8); }
    .desk { width: 10px; flex: none; position: relative; overflow: hidden; font-size: 12px; color: #111; text-shadow: 0 0 1px #fff; }
    .lbl { position: absolute; left: 2px; }
    .a { top: 318px; }
    .b { top: 564px; }
    .app { flex: 1; min-width: 0; display: flex; flex-direction: column; margin-top: 1px; background: linear-gradient(90deg, #9ebaf3, #b4cdf8); }
    .title { display: flex; align-items: center; gap: 5px; height: 38px; flex: none; background: #fff; padding: 0 0 2px 10px; color: #000; }
    .name { font: inherit; margin: 0; }
    .body { flex: 1; display: flex; min-height: 0; margin-top: 2px; background: #d6e4fb; }
    menu-bar { position: relative; z-index: 2; }
  `];

  render() {
    return html`
      <div class="desk" aria-hidden="true"><span class="lbl a">此</span><span class="lbl b">8</span></div>
      <div class="app">
        <header class="title">${icon("app")}<h1 class="name">GT Designer3 未命名1</h1></header>
        <menu-bar></menu-bar>
        <tool-strips></tool-strips>
        <div class="body"><side-dock></side-dock><screen-editor></screen-editor></div>
      </div>`;
  }
}
